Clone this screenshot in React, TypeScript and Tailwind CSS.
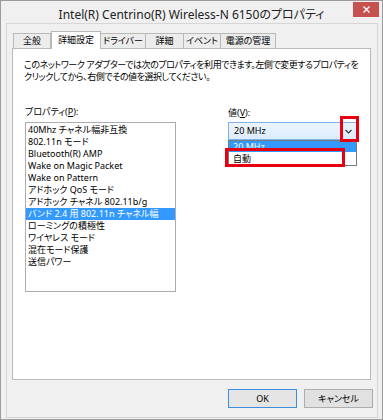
const tabs = [
  { label: '全般', width: 'w-[38px]' },
  { label: '詳細設定', width: 'w-[50px]', active: true },
  { label: 'ドライバー', width: 'w-[45px]' },
  { label: '詳細', width: 'w-[38px]' },
  { label: 'イベント', width: 'w-[37px]' },
  { label: '電源の管理', width: 'w-[55px]' },
];

const properties = [
  '40Mhz チャネル幅非互換',
  '802.11n モード',
  'Bluetooth(R) AMP',
  'Wake on Magic Packet',
  'Wake on Pattern',
  'アドホック QoS モード',
  'アドホック チャネル 802.11b/g',
  'バンド 2.4 用 802.11n チャネル幅',
  'ローミングの積極性',
  'ワイヤレス モード',
  '混在モード保護',
  '送信パワー',
];

const selected = 7;

function Chevron() {
  return (
    <svg width="7" height="5" viewBox="0 0 7 5" fill="none">
      <path d="M0.5 1L3.5 4L6.5 1" stroke="#333" strokeWidth="1.2" />
    </svg>
  );
}

export default function App() {
  return (
    <div className="relative flex flex-col w-[383px] h-[420px] overflow-hidden bg-[#f0f0f0] border border-[#9c9c9c] text-[9px] text-black font-['Noto_Sans','Noto_Sans_CJK_JP',sans-serif] [font-feature-settings:'palt']">
      {/* title bar */}
      <div className="flex items-end justify-center h-[22px] pb-[1px] shrink-0">
        <span className="text-[12px] leading-[14px] text-[#222]">Intel(R) Centrino(R) Wireless-N 6150のプロパティ</span>
      </div>
      <div className="absolute top-[1px] right-[3px] flex items-center justify-center w-[26px] h-[15px] bg-[#c75050]">
        <svg width="7" height="7" viewBox="0 0 7 7">
          <path d="M0.5 0.5L6.5 6.5M6.5 0.5L0.5 6.5" stroke="#fff" strokeWidth="1.4" />
        </svg>
      </div>

      {/* client area */}
      <div className="flex flex-col flex-1 ml-[5px] mr-[4px] mb-[1px] border border-[#d6d6d6] bg-[#f0f0f0] pt-[7px] pl-[5px] pr-[6px] pb-[9px]">
        <div className="flex items-end h-[17px] pl-[1px]">
          {tabs.map((t) =>
            t.active ? (
              <div
                key={t.label}
                className={`relative z-10 flex items-center justify-center h-[18px] -mb-px bg-white border border-b-0 border-[#b9b9b9] pb-[1px] ${t.width}`}
              >
                {t.label}
              </div>
            ) : (
              <div
                key={t.label}
                className={`flex items-center justify-center h-[15px] bg-[#ececec] border border-b-0 border-l-0 first:border-l border-[#b9b9b9] ${t.width}`}
              >
                {t.label}
              </div>
            )
          )}
        </div>

        <div className="flex-1 bg-white border border-[#b9b9b9] pt-[10px] pl-[11px]">
          <p className="leading-[12px] whitespace-nowrap tracking-[-0.45px]">
            このネットワーク アダプターでは次のプロパティを利用できます。左側で変更するプロパティを
            <br />
            クリックしてから、右側でその値を選択してください。
          </p>

          <div className="flex mt-[23px]">
            <div className="ml-[1px] w-[151px]">
              <div className="leading-[12px]">
                プロパティ(<span className="underline">P</span>):
              </div>
              <div className="mt-[4px] h-[170px] border border-[#abadb3] pt-px">
                {properties.map((p, i) => (
                  <div
                    key={p}
                    className={`h-[12px] leading-[12px] pl-[2px] whitespace-nowrap ${
                      i === selected ? 'bg-[#3399ff] text-white' : ''
                    }`}
                  >
                    {p}
                  </div>
                ))}
              </div>
            </div>

            <div className="ml-[52px] pt-px">
              <div className="leading-[12px]">
                値(<span className="underline">V</span>):
              </div>
              <div className="relative mt-[3px] w-[129px] h-[18px]">
                <div className="flex items-center h-full pl-[5px] pr-[4px] border border-[#7eb4ea] bg-gradient-to-b from-[#ecf4fc] to-[#dcecfc]">
                  <span className="flex-1">20 MHz</span>
                  <Chevron />
                </div>
                <div className="absolute top-full left-0 w-full border border-[#7a7a7a] bg-white">
                  <div className="h-[11px] leading-[11px] pl-[4px] bg-[#3399ff] text-white">20 MHz</div>
                  <div className="h-[13px] leading-[13px] pl-[4px]">自動</div>
                </div>
                <div className="absolute -top-[6px] left-[112px] w-[19px] h-[26px] border-[3px] border-[#e60012]" />
                <div className="absolute top-[26px] -left-[3px] w-[120px] h-[19px] border-[3px] border-[#e60012]" />
              </div>
            </div>
          </div>
        </div>

        <div className="flex justify-end gap-[7px] mt-[9px] -mr-[2px]">
          <button className="w-[69px] h-[19px] border border-[#3c8fdc] bg-[#e5e5e5] text-[9px] leading-none">OK</button>
          <button className="w-[69px] h-[19px] border border-[#adadad] bg-[#e1e1e1] text-[9px] leading-none">キャンセル</button>
        </div>
      </div>
    </div>
  );
}
